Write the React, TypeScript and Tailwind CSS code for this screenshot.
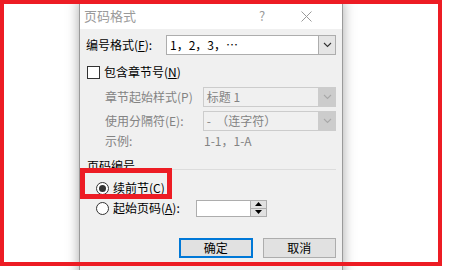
import React from "react";

const font = { fontFamily: '"Noto Sans CJK SC", "Noto Sans", sans-serif' };

function Chevron({ disabled }: { disabled?: boolean }) {
  return (
    <svg width="9" height="6" viewBox="0 0 9 6">
      <polyline
        points="1,1 4.5,4.5 8,1"
        fill="none"
        stroke={disabled ? "#a8a8a8" : "#333"}
        strokeWidth="1.1"
      />
    </svg>
  );
}

function Combo({
  value,
  disabled,
  width,
}: {
  value: React.ReactNode;
  disabled?: boolean;
  width: string;
}) {
  return (
    <div
      className={`flex h-[20px] ${width} border ${
        disabled ? "border-[#cccccc] bg-[#f0f0f0] text-[#838383]" : "border-[#adadad] bg-white text-black"
      }`}
    >
      <div className="flex flex-1 items-center pl-[3px] leading-none whitespace-pre">{value}</div>
      <div
        className={`flex w-[17px] items-center justify-center border-l ${
          disabled ? "border-[#cccccc] bg-[#cccccc]" : "border-[#adadad] bg-[#e5e5e5]"
        }`}
      >
        <Chevron disabled={disabled} />
      </div>
    </div>
  );
}

function Radio({ checked }: { checked?: boolean }) {
  return (
    <div className="flex h-[13px] w-[13px] items-center justify-center rounded-full border border-[#333] bg-white">
      {checked && <div className="h-[7px] w-[7px] rounded-full bg-[#333]" />}
    </div>
  );
}

export default function App() {
  return (
    <div className="relative h-[270px] w-[450px] overflow-hidden bg-white text-[12px] text-black" style={font}>
      {/* dialog window */}
      <div className="ml-[79px] flex h-[290px] w-[264px] flex-col border-x border-[#9a9a9a] bg-[#f0f0f0] shadow-[0_0_12px_rgba(0,0,0,0.35)]">
        <div className="flex h-[29px] items-center bg-white pl-[4px] pt-[3px]">
          <span className="flex-1 text-[13px] text-[#9a9a9a]">页码格式</span>
          <span className="w-[20px] text-center text-[13px] text-[#9a9a9a]">?</span>
          <div className="flex w-[70px] justify-center pr-[2px]">
            <svg width="11" height="11" viewBox="0 0 11 11">
              <path d="M0.5 0.5 L10.5 10.5 M10.5 0.5 L0.5 10.5" stroke="#9a9a9a" strokeWidth="1" />
            </svg>
          </div>
        </div>

        <div className="flex flex-col px-[6px]">
          {/* 编号格式 */}
          <div className="mt-[6px] flex h-[20px] items-center">
            <span className="w-[81px]">
              编号格式(<u>F</u>):
            </span>
            <Combo width="w-[172px]" value="1，2，3，⋯" />
          </div>

          {/* 包含章节号 */}
          <div className="mt-[9px] flex h-[16px] items-center pl-[1px]">
            <div className="h-[13px] w-[13px] border border-[#333] bg-white" />
            <span className="ml-[4px]">
              包含章节号(<u>N</u>)
            </span>
          </div>

          <div className="mt-[7px] flex h-[20px] items-center pl-[19px] text-[#838383]">
            <span className="w-[99px]">章节起始样式(P)</span>
            <Combo disabled width="w-[135px]" value="标题 1" />
          </div>
          <div className="mt-[4px] flex h-[20px] items-center pl-[19px] text-[#838383]">
            <span className="w-[99px]">使用分隔符(E):</span>
            <Combo disabled width="w-[135px]" value="-  （连字符）" />
          </div>
          <div className="mt-[2px] flex h-[16px] items-center pl-[19px] text-[#838383]">
            <span className="w-[99px]">示例:</span>
            <span>1-1，1-A</span>
          </div>

          {/* 页码编号 group */}
          <div className="mt-[9px] flex h-[16px] items-start pl-[1px]">
            <span className="leading-[16px]">页码编号</span>
            <div className="mt-[11px] ml-[3px] h-px flex-1 bg-[#dcdcdc]" />
          </div>
          <div className="mt-[6px] flex h-[16px] items-center pl-[10px]">
            <Radio checked />
            <span className="ml-[4px]">
              续前节(<u>C</u>)
            </span>
          </div>
          <div className="mt-[3px] flex h-[18px] items-center pl-[10px]">
            <Radio />
            <span className="ml-[4px] w-[83px]">
              起始页码(<u>A</u>):
            </span>
            <div className="flex h-[17px] w-[71px] border border-[#adadad] bg-white">
              <div className="flex-1" />
              <div className="flex w-[16px] flex-col border-l border-[#adadad] bg-[#e1e1e1]">
                <div className="flex flex-1 items-center justify-center border-b border-[#adadad]">
                  <svg width="7" height="4" viewBox="0 0 7 4">
                    <polygon points="3.5,0 7,4 0,4" fill="#000" />
                  </svg>
                </div>
                <div className="flex flex-1 items-center justify-center">
                  <svg width="7" height="4" viewBox="0 0 7 4">
                    <polygon points="0,0 7,0 3.5,4" fill="#000" />
                  </svg>
                </div>
              </div>
            </div>
          </div>

          {/* buttons */}
          <div className="mt-[21px] flex h-[20px] gap-[10px] pl-[93px]">
            <button className="flex h-[20px] w-[74px] items-center justify-center border-2 border-[#0078d7] bg-[#e1e1e1]">
              确定
            </button>
            <button className="flex h-[20px] w-[74px] items-center justify-center border border-[#adadad] bg-[#e1e1e1]">
              取消
            </button>
          </div>
        </div>
      </div>

      {/* annotation: red frames */}
      <div className="pointer-events-none absolute left-0 top-0 h-[266px] w-[442px] border-[4px] border-[#ed1c24]" />
      <div className="pointer-events-none absolute left-[80px] top-[168px] h-[31px] w-[92px] border-[5px] border-[#ed1c24]" />
    </div>
  );
}
